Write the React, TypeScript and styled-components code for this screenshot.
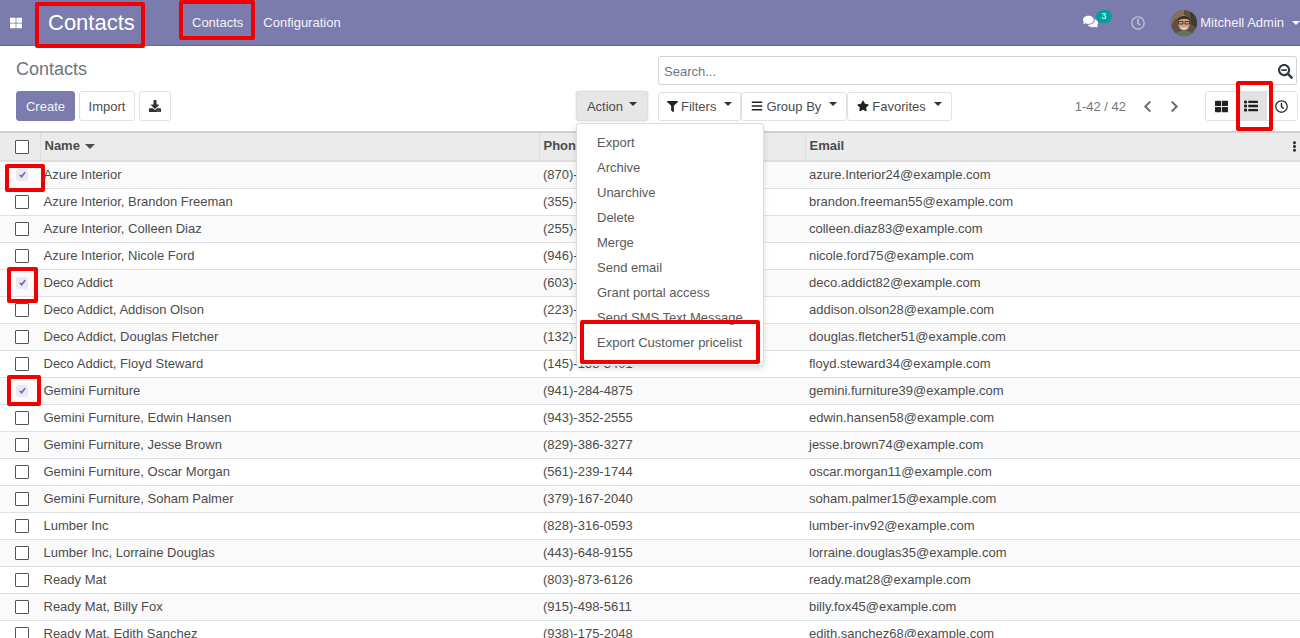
import React from "react";
import styled, { createGlobalStyle } from "styled-components";
import {
  FaBars,
  FaChevronLeft,
  FaChevronRight,
  FaComments,
  FaDownload,
  FaEllipsisV,
  FaFilter,
  FaRegClock,
  FaSearchMinus,
  FaStar,
  FaThLarge,
} from "react-icons/fa";

const GlobalStyle = createGlobalStyle`
  html, body {
    margin: 0;
    padding: 0;
    background: #fff;
    font-family: "Liberation Sans", Arial, sans-serif;
    font-size: 13px;
    color: #4c4c4c;
  }
  * {
    box-sizing: border-box;
  }
`;

const Page = styled.div`
  position: relative;
  width: 1300px;
  height: 638px;
  overflow: hidden;
`;

const Navbar = styled.header`
  display: flex;
  align-items: center;
  height: 46px;
  padding-left: 10px;
  background: #7c7bad;
  border-bottom: 1px solid #6a6a9a;
  color: #fff;
`;

const Brand = styled.div`
  margin-left: 14px;
  width: 146px;
  padding-left: 12px;
  font-size: 22px;
  line-height: 45px;
`;

const NavLink = styled.a`
  padding: 0 10px;
  line-height: 45px;
  color: #f4f4f8;
`;

const Systray = styled.div`
  display: flex;
  align-items: center;
  margin-left: auto;
  height: 45px;
`;

const Messages = styled.div`
  position: relative;
  width: 48px;
  height: 20px;
  font-size: 15px;
  padding-top: 1px;
`;

const Badge = styled.span`
  position: absolute;
  left: 13px;
  top: -3px;
  width: 16px;
  height: 13px;
  border-radius: 7px;
  background: #00a09d;
  color: #fff;
  font-size: 9px;
  line-height: 13px;
  text-align: center;
`;

const ClockSlot = styled.div`
  display: flex;
  width: 40px;
  font-size: 14px;
  color: #c3c3d8;
`;

const Avatar = styled.svg`
  width: 26px;
  height: 26px;
  border-radius: 50%;
  margin-right: 3.5px;
`;

const UserName = styled.span`
  color: #f4f4f8;
`;

const Caret = styled.span`
  display: inline-block;
  width: 0;
  height: 0;
  margin-left: 6px;
  margin-bottom: 4px;
  border-top: 4px solid #333;
  border-left: 4px solid transparent;
  border-right: 4px solid transparent;
`;

const UserCaret = styled(Caret)`
  margin: 0 0 0 8px;
  border-top-color: #fff;
`;

const ControlPanel = styled.section`
  display: grid;
  grid-template-columns: 642px 1fr;
  height: 85px;
  padding: 10px 2px 0 16px;
`;

const PanelLeft = styled.div`
  display: flex;
  flex-direction: column;
  justify-content: space-between;
  padding-bottom: 10px;
`;

const Breadcrumb = styled.div`
  padding-top: 3px;
  font-size: 18px;
  color: #6c757d;
`;

const ButtonRow = styled.div`
  display: flex;
  align-items: center;
`;

const Button = styled.button`
  display: inline-flex;
  align-items: center;
  justify-content: center;
  height: 30px;
  padding: 0 9px;
  margin: 0;
  background: #fff;
  border: 1px solid #dee2e6;
  border-radius: 3px;
  font-family: inherit;
  font-size: 13px;
  color: #4c4c4c;
`;

const CreateButton = styled(Button)`
  width: 59px;
  margin-right: 4px;
  background: #7c7bad;
  border-color: #7c7bad;
  color: #f2f2f7;
`;

const ImportButton = styled(Button)`
  width: 56px;
  margin-right: 4px;
`;

const IconButton = styled(Button)`
  width: 32px;
  color: #333;
`;

const ActionButton = styled(Button)`
  width: 72px;
  margin-left: auto;
  margin-right: 10px;
  background: #e6e6e6;
  border-color: #e0e0e0;
  box-shadow: 0 0 2px rgba(0, 0, 0, 0.2);
`;

const PanelRight = styled.div`
  display: flex;
  flex-direction: column;
  gap: 6px;
`;

const SearchBox = styled.div`
  display: flex;
  align-items: center;
  justify-content: space-between;
  height: 29px;
  padding: 1px 3px 0 5px;
  margin-right: 1px;
  border: 1px solid #ced4da;
  border-radius: 3px;
  color: #6f7780;
  font-size: 13px;
`;

const SearchIcon = styled.span`
  display: flex;
  font-size: 15px;
  color: #2f3b40;
`;

const FilterRow = styled.div`
  display: flex;
  align-items: center;
  height: 30px;
`;

const FilterButton = styled(Button)`
  height: 29px;
  gap: 3px;
  padding: 0 9px;
  svg {
    color: #222;
    font-size: 12px;
  }
  &:first-child {
    padding: 0 8px;
    svg {
      font-size: 11px;
    }
  }
`;

const FilterCaret = styled(Caret)`
  margin-left: 5px;
`;

const Pager = styled.div`
  display: flex;
  align-items: center;
  margin-left: auto;
  color: #6c757d;
`;

const PagerArrow = styled.span`
  display: flex;
  margin-left: 14.5px;
  font-size: 13px;
  color: #6c6c6c;
`;

const SwitchGroup = styled.div`
  display: flex;
  width: 93px;
  height: 30px;
  margin-left: 24px;
  border: 1px solid #dee2e6;
  border-radius: 3px;
  overflow: hidden;
`;

const SwitchButton = styled.div<{ $active?: boolean }>`
  display: flex;
  flex: 1;
  align-items: center;
  justify-content: center;
  font-size: 13px;
  color: #222;
  background: ${(p) => (p.$active ? "#e2e2e2" : "#fff")};
`;

const ListGlyph = styled.svg`
  width: 14px;
  height: 12px;
  fill: #222;
`;

const Table = styled.table`
  width: 1300px;
  border-collapse: collapse;
  table-layout: fixed;
`;

const HeadRow = styled.tr`
  height: 29px;
  background: #ebebeb;
  border-top: 2px solid #d0d0d0;
  border-bottom: 2px solid #dedede;
`;

const HeadCell = styled.th`
  position: relative;
  padding: 0 4px 2px;
  text-align: left;
  font-size: 13px;
  font-weight: 700;
  color: #4c4c4c;
  border-left: 1px solid #dedede;
`;

const SortCaret = styled(Caret)`
  margin: 0 0 1px 5px;
  border-top: 5px solid #4c4c4c;
  border-left-width: 5px;
  border-right-width: 5px;
`;

const MoreIcon = styled.span`
  position: absolute;
  right: 0;
  top: 8px;
  display: flex;
  font-size: 11px;
  color: #333;
`;

const Row = styled.tr<{ $shade: boolean }>`
  height: 27px;
  background: ${(p) => (p.$shade ? "#fafafa" : "#fff")};
  border-bottom: 1px solid #dee2e6;
`;

const Cell = styled.td`
  padding: 0 4px;
  font-size: 13px;
  color: #4c4c4c;
  white-space: nowrap;
  overflow: hidden;
`;

const NameCell = styled(Cell)`
  padding-left: 3.5px;
`;

const CheckCell = styled.td`
  padding: 0 0 0 15px;
`;

const CheckHeadCell = styled.th`
  padding: 0 0 0 15px;
`;

const Checkbox = styled.span`
  display: block;
  width: 14px;
  height: 14px;
  border-radius: 1px;
  border: 1.5px solid #555;
  background: #fff;
`;

const CheckedBox = styled.span`
  display: flex;
  align-items: center;
  justify-content: center;
  width: 12px;
  height: 12px;
  margin-left: 1px;
  border-radius: 3px;
  background: #e9e9f2;
`;

const CheckMark = styled.svg`
  width: 7px;
  height: 7px;
  fill: none;
  stroke: #6f6ea3;
  stroke-width: 2;
`;

const Dropdown = styled.ul`
  position: absolute;
  left: 576px;
  top: 123px;
  width: 188px;
  margin: 0;
  padding: 6px 0 10px;
  list-style: none;
  background: #fff;
  border: 1px solid #dcdcdc;
  border-radius: 3px;
  box-shadow: 0 3px 6px rgba(0, 0, 0, 0.12);
`;

const DropdownItem = styled.li`
  padding-left: 20px;
  line-height: 25px;
  color: #5a5a5a;
  white-space: nowrap;
`;

const Mark = styled.div<{ $l: number; $t: number; $w: number; $h: number }>`
  position: absolute;
  left: ${(p) => p.$l}px;
  top: ${(p) => p.$t}px;
  width: ${(p) => p.$w}px;
  height: ${(p) => p.$h}px;
  border: 4px solid #f00000;
  border-radius: 2px;
  pointer-events: none;
`;

const contacts = [
  ["Azure Interior", "(870)-931-0505", "azure.Interior24@example.com", true],
  ["Azure Interior, Brandon Freeman", "(355)-687-3262", "brandon.freeman55@example.com"],
  ["Azure Interior, Colleen Diaz", "(255)-595-8393", "colleen.diaz83@example.com"],
  ["Azure Interior, Nicole Ford", "(946)-638-6034", "nicole.ford75@example.com"],
  ["Deco Addict", "(603)-996-3829", "deco.addict82@example.com", true],
  ["Deco Addict, Addison Olson", "(223)-399-7637", "addison.olson28@example.com"],
  ["Deco Addict, Douglas Fletcher", "(132)-553-7242", "douglas.fletcher51@example.com"],
  ["Deco Addict, Floyd Steward", "(145)-158-3401", "floyd.steward34@example.com"],
  ["Gemini Furniture", "(941)-284-4875", "gemini.furniture39@example.com", true],
  ["Gemini Furniture, Edwin Hansen", "(943)-352-2555", "edwin.hansen58@example.com"],
  ["Gemini Furniture, Jesse Brown", "(829)-386-3277", "jesse.brown74@example.com"],
  ["Gemini Furniture, Oscar Morgan", "(561)-239-1744", "oscar.morgan11@example.com"],
  ["Gemini Furniture, Soham Palmer", "(379)-167-2040", "soham.palmer15@example.com"],
  ["Lumber Inc", "(828)-316-0593", "lumber-inv92@example.com"],
  ["Lumber Inc, Lorraine Douglas", "(443)-648-9155", "lorraine.douglas35@example.com"],
  ["Ready Mat", "(803)-873-6126", "ready.mat28@example.com"],
  ["Ready Mat, Billy Fox", "(915)-498-5611", "billy.fox45@example.com"],
  ["Ready Mat, Edith Sanchez", "(938)-175-2048", "edith.sanchez68@example.com"],
] as [string, string, string, boolean?][];

const actions = [
  "Export",
  "Archive",
  "Unarchive",
  "Delete",
  "Merge",
  "Send email",
  "Grant portal access",
  "Send SMS Text Message",
  "Export Customer pricelist",
];

const marks = [
  { l: 35, t: 2, w: 110, h: 46 },
  { l: 179, t: 0, w: 76, h: 40 },
  { l: 1236, t: 81, w: 37, h: 50 },
  { l: 5, t: 164, w: 40, h: 28 },
  { l: 7, t: 267, w: 31, h: 36 },
  { l: 7, t: 375, w: 34, h: 31 },
  { l: 580, t: 320, w: 180, h: 44 },
];

const App: React.FC = () => {
  return (
    <Page>
      <GlobalStyle />
      <Navbar>
        <FaThLarge size={12} />
        <Brand>Contacts</Brand>
        <NavLink>Contacts</NavLink>
        <NavLink>Configuration</NavLink>
        <Systray>
          <Messages>
            <FaComments />
            <Badge>3</Badge>
          </Messages>
          <ClockSlot>
            <FaRegClock />
          </ClockSlot>
          <Avatar viewBox="0 0 26 26">
            <rect width="26" height="26" fill="#5e5040" />
            <path d="M0 0h13v6L4 9 0 16z" fill="#8a7054" />
            <path d="M19 2h7v16l-6-4z" fill="#3f3a30" />
            <ellipse cx="13" cy="13" rx="6" ry="7.500" fill="#cfa084" />
            <path d="M7 11c-1-6 12-7 12 0-2-3-9-3-12 0z" fill="#3a2e26" />
            <path d="M7.500 11.500h4.500v2.500H7.500zM14 11.500h4.500v2.500H14z" fill="none" stroke="#2b2420" strokeWidth="0.800" />
            <path d="M10 17.500c2 1.500 4 1.500 6 0" fill="none" stroke="#efe6dc" strokeWidth="1.200" />
            <path d="M4 26c1-4 4-5 9-5s8 1 9 5z" fill="#6b7062" />
          </Avatar>
          <UserName>Mitchell Admin</UserName>
          <UserCaret />
        </Systray>
      </Navbar>

      <ControlPanel>
        <PanelLeft>
          <Breadcrumb>Contacts</Breadcrumb>
          <ButtonRow>
            <CreateButton>Create</CreateButton>
            <ImportButton>Import</ImportButton>
            <IconButton>
              <FaDownload size={12} />
            </IconButton>
            <ActionButton>
              Action
              <Caret />
            </ActionButton>
          </ButtonRow>
        </PanelLeft>
        <PanelRight>
          <SearchBox>
            Search...
            <SearchIcon>
              <FaSearchMinus />
            </SearchIcon>
          </SearchBox>
          <FilterRow>
            <FilterButton>
              <FaFilter />
              Filters
              <FilterCaret />
            </FilterButton>
            <FilterButton>
              <FaBars />
              Group By
              <FilterCaret />
            </FilterButton>
            <FilterButton>
              <FaStar />
              Favorites
              <FilterCaret />
            </FilterButton>
            <Pager>
              1-42 / 42
              <PagerArrow>
                <FaChevronLeft />
              </PagerArrow>
              <PagerArrow>
                <FaChevronRight />
              </PagerArrow>
            </Pager>
            <SwitchGroup>
              <SwitchButton>
                <FaThLarge />
              </SwitchButton>
              <SwitchButton $active>
                <ListGlyph viewBox="0 0 14 12">
                  <rect x="0" y="0.400" width="3" height="3" rx="1.200" />
                  <rect x="0" y="4.500" width="3" height="3" rx="1.200" />
                  <rect x="0" y="8.600" width="3" height="3" rx="1.200" />
                  <rect x="4.300" y="0.700" width="9.700" height="2.400" rx="0.500" />
                  <rect x="4.300" y="4.800" width="9.700" height="2.400" rx="0.500" />
                  <rect x="4.300" y="8.900" width="9.700" height="2.400" rx="0.500" />
                </ListGlyph>
              </SwitchButton>
              <SwitchButton>
                <FaRegClock />
              </SwitchButton>
            </SwitchGroup>
          </FilterRow>
        </PanelRight>
      </ControlPanel>

      <Table>
        <colgroup>
          <col width="40" />
          <col width="499" />
          <col width="266" />
          <col width="495" />
        </colgroup>
        <thead>
          <HeadRow>
            <CheckHeadCell>
              <Checkbox />
            </CheckHeadCell>
            <HeadCell>
              Name
              <SortCaret />
            </HeadCell>
            <HeadCell>Phone</HeadCell>
            <HeadCell>
              Email
              <MoreIcon>
                <FaEllipsisV />
              </MoreIcon>
            </HeadCell>
          </HeadRow>
        </thead>
        <tbody>
          {contacts.map(([name, phone, email, checked], i) => (
            <Row key={name} $shade={i % 2 === 0}>
              <CheckCell>
                {checked ? (
                  <CheckedBox>
                    <CheckMark viewBox="0 0 8 8">
                      <path d="M1 4.500 3 6.500 7 1.500" />
                    </CheckMark>
                  </CheckedBox>
                ) : (
                  <Checkbox />
                )}
              </CheckCell>
              <NameCell>{name}</NameCell>
              <Cell>{phone}</Cell>
              <Cell>{email}</Cell>
            </Row>
          ))}
        </tbody>
      </Table>

      <Dropdown>
        {actions.map((a) => (
          <DropdownItem key={a}>{a}</DropdownItem>
        ))}
      </Dropdown>

      {marks.map((m, i) => (
        <Mark key={i} $l={m.l} $t={m.t} $w={m.w} $h={m.h} />
      ))}
    </Page>
  );
};

export default App;
